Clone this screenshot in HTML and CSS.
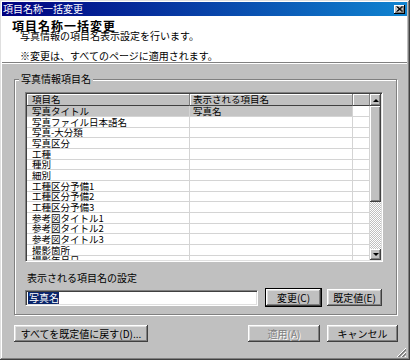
FILE: index.html
```html
<!DOCTYPE html>
<html lang="ja">
<head>
    <meta charset="UTF-8">
    <meta name="viewport" content="width=device-width, initial-scale=1.0">
    <title>項目名称一括変更</title>
    <link rel="stylesheet" href="styles.css">
</head>
<body>
    <div class="window">
        <div class="titlebar">
            <span class="title">項目名称一括変更</span>
            <span class="close">
                <svg width="7" height="6" viewBox="0 0 7 6"><path d="M0.5 0.5 L6 5.5 M1.5 0.5 L7 5.5 M6 0.5 L0.5 5.5 M7 0.5 L1.5 5.5" stroke="#000" stroke-width="1" fill="none"/></svg>
            </span>
        </div>
        <div class="header">
            <h1>項目名称一括変更</h1>
            <p class="sub">写真情報の項目名表示設定を行います。</p>
            <p class="note">※変更は、すべてのページに適用されます。</p>
        </div>
        <div class="content">
            <fieldset class="group">
                <legend>写真情報項目名</legend>
                <div class="list">
                    <div class="rows">
                        <div class="row head">
                            <div class="cell">項目名</div>
                            <div class="cell">表示される項目名</div>
                            <div class="cell"></div>
                        </div>
                        <div class="row selected">
                            <div class="cell">写真タイトル</div>
                            <div class="cell">写真名</div>
                            <div class="cell"></div>
                        </div>
                        <div class="row"><div class="cell">写真ファイル日本語名</div><div class="cell"></div><div class="cell"></div></div>
                        <div class="row"><div class="cell">写真-大分類</div><div class="cell"></div><div class="cell"></div></div>
                        <div class="row"><div class="cell">写真区分</div><div class="cell"></div><div class="cell"></div></div>
                        <div class="row"><div class="cell">工種</div><div class="cell"></div><div class="cell"></div></div>
                        <div class="row"><div class="cell">種別</div><div class="cell"></div><div class="cell"></div></div>
                        <div class="row"><div class="cell">細別</div><div class="cell"></div><div class="cell"></div></div>
                        <div class="row"><div class="cell">工種区分予備1</div><div class="cell"></div><div class="cell"></div></div>
                        <div class="row"><div class="cell">工種区分予備2</div><div class="cell"></div><div class="cell"></div></div>
                        <div class="row"><div class="cell">工種区分予備3</div><div class="cell"></div><div class="cell"></div></div>
                        <div class="row"><div class="cell">参考図タイトル1</div><div class="cell"></div><div class="cell"></div></div>
                        <div class="row"><div class="cell">参考図タイトル2</div><div class="cell"></div><div class="cell"></div></div>
                        <div class="row"><div class="cell">参考図タイトル3</div><div class="cell"></div><div class="cell"></div></div>
                        <div class="row"><div class="cell">撮影箇所</div><div class="cell"></div><div class="cell"></div></div>
                        <div class="row"><div class="cell">撮影年月日</div><div class="cell"></div><div class="cell"></div></div>
                    </div>
                    <div class="scrollbar">
                        <div class="sb-btn up"><span class="arrow-up"></span></div>
                        <div class="sb-thumb"></div>
                        <div class="sb-track"></div>
                        <div class="sb-btn down"><span class="arrow-down"></span></div>
                    </div>
                </div>
                <div class="setting-label">表示される項目名の設定</div>
                <div class="setting-row">
                    <div class="input"><span class="sel">写真名</span></div>
                    <button class="btn default btn-change">変更(C)</button>
                    <button class="btn btn-reset">既定値(E)</button>
                </div>
            </fieldset>
            <div class="footer">
                <button class="btn btn-all">すべてを既定値に戻す(D)...</button>
                <button class="btn btn-apply" disabled>適用(A)</button>
                <button class="btn btn-cancel">キャンセル</button>
            </div>
        </div>
        <div class="grip">
            <svg width="11" height="11" viewBox="0 0 11 11">
                <path d="M10 1 L1 10 M10 5 L5 10 M10 9 L9 10" stroke="#fff" stroke-width="1" fill="none"/>
                <path d="M10 2 L2 10 M10 3 L3 10 M10 6 L6 10 M10 7 L7 10" stroke="#808080" stroke-width="1" fill="none"/>
            </svg>
        </div>
    </div>
</body>
</html>
```

FILE: styles.css
```css
* {
    box-sizing: border-box;
}
body {
    margin: 0;
    font-family: "Noto Sans CJK JP", "Noto Sans", sans-serif;
    font-size: 10px;
    color: #000;
    background: #c0c0c0;
}
.window {
    position: relative;
    width: 410px;
    height: 360px;
    padding: 2px 3px 2px 2px;
    background: #c0c0c0;
    box-shadow: inset -1px -1px #404040, inset 1px 1px #dfdfdf, inset -2px -2px #808080, inset 2px 2px #fff;
    display: flex;
    flex-direction: column;
}
.titlebar {
    height: 14px;
    display: flex;
    align-items: center;
    justify-content: space-between;
    padding: 0 2px 0 1px;
    background: linear-gradient(90deg, #000080, #1084d0);
    color: #fff;
}
.titlebar .title {
    line-height: 12px;
    font-size: 10px;
}
.close {
    width: 11px;
    height: 9px;
    display: flex;
    align-items: center;
    justify-content: center;
    background: #c0c0c0;
    box-shadow: inset -1px -1px #000, inset 1px 1px #fff, inset -2px -2px #808080;
}
.close svg {
    display: block;
}
.header {
    height: 47px;
    padding: 3px 0 0 10px;
    background: #fff;
    border-bottom: 1px solid #808080;
    box-shadow: 0 1px #fff;
}
.header h1 {
    margin: 0;
    font-size: 12px;
    line-height: 13px;
    letter-spacing: 1px;
    font-weight: bold;
}
.header p {
    margin: 0 0 0 8px;
    line-height: 10px;
}
.header .sub {
    margin-top: -1px;
}
.header .note {
    margin-top: 10px;
}
.content {
    padding-left: 12px;
}
.group {
    width: 383px;
    margin: 10px 0 0;
    padding: 7px 0 7px 4px;
    border: 1px solid #808080;
    box-shadow: inset 1px 1px #fff, 1px 1px #fff;
    min-width: 0;
}
.group legend {
    padding: 0 2px;
    line-height: 12px;
    background: #c0c0c0;
}
.list {
    margin-left: 6px;
    width: 358px;
    height: 170px;
    display: flex;
    padding: 1px;
    border: 1px solid;
    border-color: #808080 #fff #fff #808080;
    box-shadow: inset 1px 1px #404040, inset -1px -1px #dfdfdf;
    background: #fff;
}
.rows {
    width: 343px;
    height: 166px;
    overflow: hidden;
}
.row {
    display: grid;
    grid-template-columns: 163px 163px 17px;
    height: 10.667px;
}
.cell {
    padding-left: 3px;
    font-size: 9.5px;
    line-height: 10px;
    white-space: nowrap;
    border-right: 1px solid #d4d4d4;
    border-bottom: 1px solid #d4d4d4;
}
.cell:first-child {
    padding-left: 5px;
}
.row.head {
    height: 12px;
}
.row.head .cell {
    line-height: 11px;
    background: #c0c0c0;
    border-right: 1px solid #808080;
    border-bottom: 1px solid #404040;
    box-shadow: inset 1px 1px #fff;
}
.row.selected .cell {
    background: #c4c4c4;
}
.row.selected .cell:last-child {
    background: #fff;
}
.scrollbar {
    width: 11px;
    display: flex;
    flex-direction: column;
}
.sb-btn, .sb-thumb {
    background: #c0c0c0;
    box-shadow: inset -1px -1px #404040, inset 1px 1px #fff, inset -2px -2px #808080;
}
.sb-btn {
    height: 12px;
    display: flex;
    align-items: center;
    justify-content: center;
}
.sb-btn.down {
    height: 11px;
}
.sb-thumb {
    height: 96px;
}
.sb-track {
    flex: 1;
    background: repeating-conic-gradient(#c0c0c0 0 25%, #fff 0 50%) 0 0 / 2px 2px;
}
.arrow-up {
    width: 0;
    height: 0;
    border-left: 3px solid transparent;
    border-right: 3px solid transparent;
    border-bottom: 3px solid #000;
}
.arrow-down {
    width: 0;
    height: 0;
    border-left: 3px solid transparent;
    border-right: 3px solid transparent;
    border-top: 3px solid #000;
}
.setting-label {
    margin: 10px 0 0 8px;
    line-height: 12px;
}
.setting-row {
    margin: 4px 0 0 6px;
    height: 19px;
    display: flex;
    align-items: center;
}
.input {
    width: 233px;
    height: 16px;
    padding: 1px 0 0 2px;
    background: #fff;
    border: 1px solid;
    border-color: #808080 #fff #fff #808080;
    box-shadow: inset 1px 1px #404040, inset -1px -1px #dfdfdf;
    line-height: 12px;
}
.input .sel {
    display: inline-block;
    padding: 0 0 0 1px;
    background: #0a246a;
    color: #fff;
}
.btn {
    font-family: inherit;
    font-size: 10px;
    color: #000;
    height: 17px;
    padding: 0;
    line-height: 12px;
    background: #c0c0c0;
    border: none;
    box-shadow: inset -1px -1px #404040, inset 1px 1px #fff, inset -2px -2px #808080, inset 2px 2px #dfdfdf;
}
.btn.default {
    height: 19px;
    border: 1px solid #000;
}
.btn-change {
    width: 57px;
    margin-left: 7px;
}
.btn-reset {
    width: 55px;
    margin-left: 5px;
}
.footer {
    width: 384px;
    margin-top: 10px;
    display: flex;
}
.btn-all {
    width: 134px;
}
.btn-apply {
    width: 72px;
    margin-left: auto;
    color: #808080;
    text-shadow: 1px 1px #fff;
}
.btn-cancel {
    width: 71px;
    margin-left: 7px;
}
.grip {
    position: absolute;
    right: 3px;
    bottom: 2px;
    width: 11px;
    height: 11px;
}
.grip svg {
    display: block;
}
```
